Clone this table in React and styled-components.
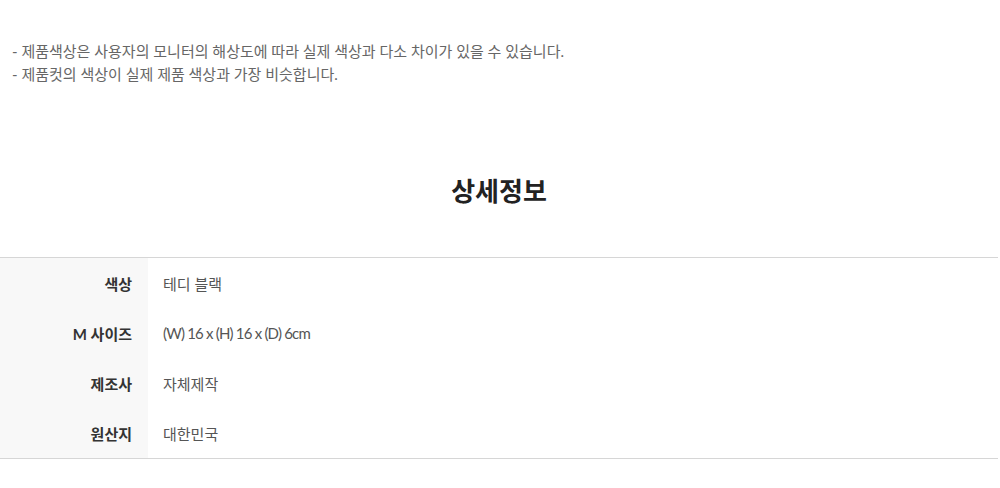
import React from "react";
import styled, { createGlobalStyle } from "styled-components";

const GlobalStyle = createGlobalStyle`
  body {
    margin: 0;
    background: #fff;
    font-family: Lato, "Noto Sans CJK KR", sans-serif;
  }
`;

const notices = [
  "- 제품색상은 사용자의 모니터의 해상도에 따라 실제 색상과 다소 차이가 있을 수 있습니다.",
  "- 제품컷의 색상이 실제 제품 색상과 가장 비슷합니다.",
];

const details = [
  { label: "색상", value: "테디 블랙" },
  { label: "M 사이즈", value: "(W) 16 x (H) 16 x (D) 6cm", tight: true },
  { label: "제조사", value: "자체제작" },
  { label: "원산지", value: "대한민국" },
];

const App = () => {
  return (
    <Page>
      <GlobalStyle />
      <Notice>
        {notices.map((n) => (
          <p key={n}>{n}</p>
        ))}
      </Notice>
      <Title>상세정보</Title>
      <Table>
        {details.map((d) => (
          <Row key={d.label}>
            <Label>{d.label}</Label>
            <Value $tight={d.tight}>{d.value}</Value>
          </Row>
        ))}
      </Table>
    </Page>
  );
};

export default App;

const Page = styled.div`
  width: 998px;
  padding-top: 40px;
`;

const Notice = styled.div`
  padding-left: 12px;
  color: #666;
  font-size: 15px;

  p {
    margin: 0;
    line-height: 23px;
  }
`;

const Title = styled.h2`
  margin: 88px 0 0;
  text-align: center;
  font-size: 26px;
  font-weight: 700;
  color: #222;
  line-height: 34px;
`;

const Table = styled.div`
  margin-top: 49px;
  border-top: 1px solid #d6d6d6;
  border-bottom: 1px solid #d6d6d6;
`;

const Row = styled.div`
  display: flex;
  height: 50px;
  font-size: 15px;
`;

const Label = styled.div`
  width: 148px;
  box-sizing: border-box;
  padding-right: 16px;
  background: #f8f8f8;
  display: flex;
  align-items: center;
  justify-content: flex-end;
  font-weight: 700;
  color: #333;
`;

const Value = styled.div`
  flex: 1;
  display: flex;
  align-items: center;
  padding-left: 15px;
  color: #555;
  letter-spacing: ${(p) => (p.$tight ? "-0.8px" : "0")};
`;
